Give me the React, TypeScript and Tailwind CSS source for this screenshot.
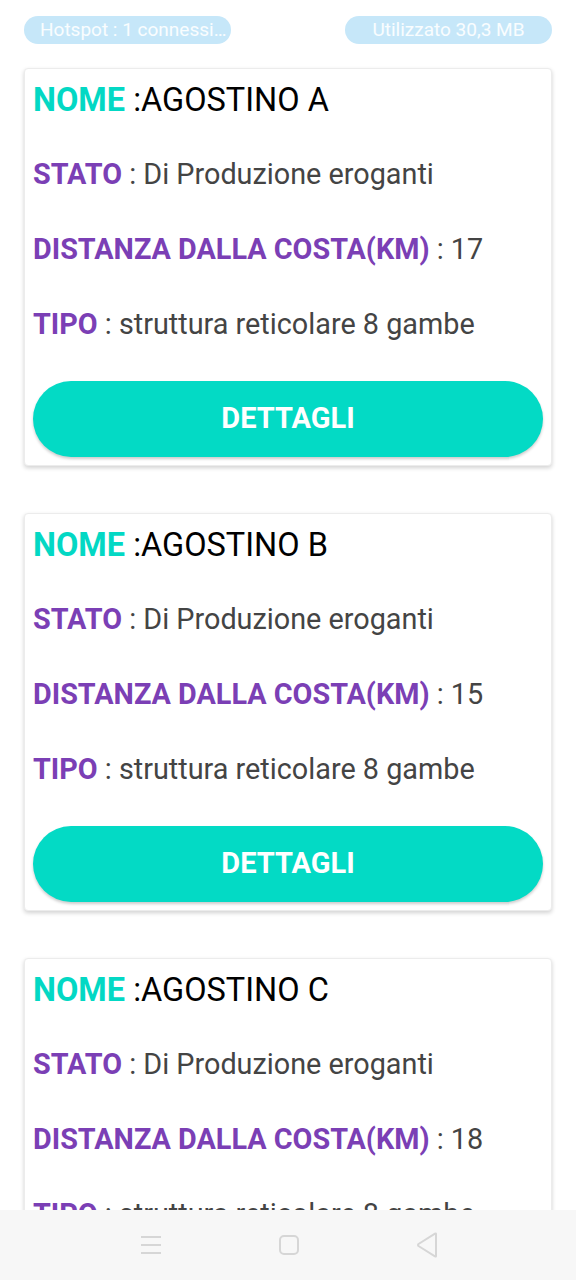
const piattaforme = [
  { nome: "AGOSTINO A", stato: "Di Produzione eroganti", distanza: "17", tipo: "struttura reticolare 8 gambe" },
  { nome: "AGOSTINO B", stato: "Di Produzione eroganti", distanza: "15", tipo: "struttura reticolare 8 gambe" },
  { nome: "AGOSTINO C", stato: "Di Produzione eroganti", distanza: "18", tipo: "struttura reticolare 8 gambe" },
];

function Riga({ label, value }: { label: string; value: string }) {
  return (
    <div className="h-[75px] flex items-center text-[28.8px] whitespace-nowrap">
      <span className="font-bold text-[#7b3fb5]">{label}</span>
      <span className="text-[#444444]">&nbsp;: {value}</span>
    </div>
  );
}

function Card({ p }: { p: (typeof piattaforme)[number] }) {
  return (
    <div className="bg-white border border-[#ececec] rounded-[4px] shadow-[0_2px_4px_rgba(0,0,0,0.18)] px-2 pb-2">
      <div className="h-[63px] flex items-center text-[32.5px] whitespace-nowrap">
        <span className="font-bold text-[#03d8c4]">NOME</span>
        <span className="text-black">&nbsp;:{p.nome}</span>
      </div>
      <div className="mt-[5px]">
        <Riga label="STATO" value={p.stato} />
        <Riga label="DISTANZA DALLA COSTA(KM)" value={p.distanza} />
        <Riga label="TIPO" value={p.tipo} />
      </div>
      <button className="mt-[19px] w-full h-[76px] rounded-full bg-[#03dac5] text-white font-bold text-[29px] shadow-[0_2px_3px_rgba(0,0,0,0.2)]">
        DETTAGLI
      </button>
    </div>
  );
}

export default function App() {
  return (
    <div className="h-[1280px] overflow-hidden bg-white" style={{ fontFamily: "Roboto, 'Noto Sans', sans-serif" }}>
      <div className="flex justify-between px-6 pt-4 h-[68px] items-start">
        <div className="w-[207px] h-[28px] rounded-full bg-[#c6e7f9] flex items-center pl-4 text-white/90 text-[19px] whitespace-nowrap">
          Hotspot : 1 connessi…
        </div>
        <div className="w-[207px] h-[28px] rounded-full bg-[#c6e7f9] flex items-center justify-center text-white/90 text-[19px]">
          Utilizzato 30,3 MB
        </div>
      </div>

      <div className="flex flex-col gap-[47px] px-6 pb-24">
        {piattaforme.map((p) => (
          <Card key={p.nome} p={p} />
        ))}
      </div>

      <div className="fixed bottom-0 left-0 right-0 h-[70px] bg-[#f7f7f7] flex items-center justify-center">
        <div className="flex items-center justify-between w-[300px]">
          <svg width="20" height="18" viewBox="0 0 20 18" className="ml-[3px]">
            <g stroke="#d6d6d6" strokeWidth="2">
              <line x1="0" y1="1" x2="20" y2="1" />
              <line x1="0" y1="9" x2="20" y2="9" />
              <line x1="0" y1="17" x2="20" y2="17" />
            </g>
          </svg>
          <svg width="20" height="20" viewBox="0 0 20 20">
            <rect x="1" y="1" width="18" height="18" rx="4" fill="none" stroke="#d6d6d6" strokeWidth="2" />
          </svg>
          <svg width="22" height="26" viewBox="0 0 22 26">
            <path d="M20 2 L20 24 Q20 25 19 24.4 L2.5 14 Q1.5 13 2.5 12 L19 1.6 Q20 1 20 2 Z" fill="none" stroke="#d6d6d6" strokeWidth="2" strokeLinejoin="round" />
          </svg>
        </div>
      </div>
    </div>
  );
}
